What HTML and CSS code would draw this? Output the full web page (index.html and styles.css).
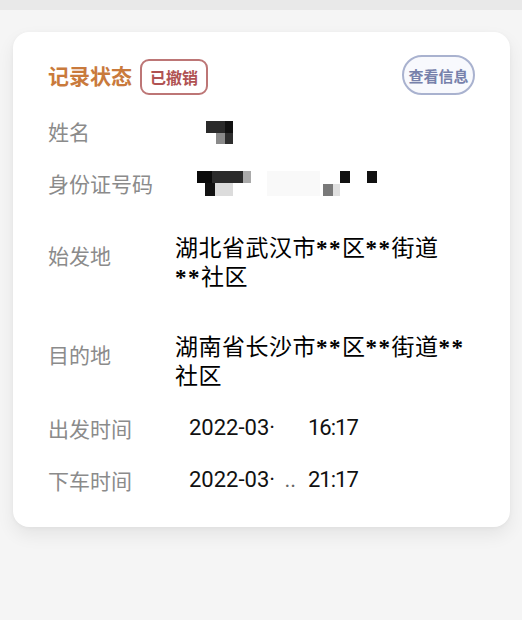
FILE: index.html
```html
<!DOCTYPE html>
<html lang="zh-CN">
<head>
    <meta charset="UTF-8">
    <meta name="viewport" content="width=device-width, initial-scale=1.0">
    <title>记录详情</title>
    <link rel="stylesheet" href="styles.css">
</head>
<body>
    <div class="top-strip"></div>

    <div class="card">
        <div class="card-header">
            <div class="status">
                <span class="status-title">记录状态</span>
                <span class="status-badge">已撤销</span>
            </div>
            <button class="info-button">查看信息</button>
        </div>

        <div class="row row-name">
            <div class="label">姓名</div>
            <div class="value">
                <svg class="mosaic mosaic-name" width="27" height="23" viewBox="0 0 27 23">
                    <rect x="0" y="0" width="19" height="12" fill="#2a2a2a"/>
                    <rect x="19" y="0" width="8" height="12" fill="#111"/>
                    <rect x="10" y="12" width="9" height="11" fill="#8a8a8a"/>
                    <rect x="19" y="12" width="8" height="11" fill="#2e2e2e"/>
                </svg>
            </div>
        </div>

        <div class="row row-id">
            <div class="label">身份证号码</div>
            <div class="value">
                <svg class="mosaic mosaic-id" width="181" height="25" viewBox="0 0 181 25">
                    <rect x="70" y="0" width="53" height="25" fill="#f9f9f9"/>
                    <rect x="0" y="0" width="15" height="12" fill="#0a0a0a"/>
                    <rect x="15" y="0" width="31" height="12" fill="#2b2b2b"/>
                    <rect x="46" y="0" width="8" height="12" fill="#aaa"/>
                    <rect x="8" y="12" width="10" height="13" fill="#111"/>
                    <rect x="18" y="12" width="18" height="13" fill="#dcdcdc"/>
                    <rect x="126" y="13" width="10" height="12" fill="#7a7a7a"/>
                    <rect x="136" y="13" width="7" height="12" fill="#e0e0e0"/>
                    <rect x="143" y="0" width="10" height="12" fill="#111"/>
                    <rect x="170" y="0" width="10" height="12" fill="#111"/>
                </svg>
            </div>
        </div>

        <div class="row row-address row-start">
            <div class="label">始发地</div>
            <div class="address">湖北省武汉市<span class="star">**</span>区<span class="star">**</span>街道<br><span class="star">**</span>社区</div>
        </div>

        <div class="row row-address row-dest">
            <div class="label">目的地</div>
            <div class="address">湖南省长沙市<span class="star">**</span>区<span class="star">**</span>街道<span class="star">**</span>社区</div>
        </div>

        <div class="row row-time row-depart">
            <div class="label">出发时间</div>
            <div class="time-value">
                <span class="date">2022-03·</span>
                <span class="clock">16:17</span>
            </div>
        </div>

        <div class="row row-time row-arrive">
            <div class="label">下车时间</div>
            <div class="time-value">
                <span class="date">2022-03· <span class="dots">..</span></span>
                <span class="clock">21:17</span>
            </div>
        </div>
    </div>
</body>
</html>
```

FILE: styles.css
```css
* {
    margin: 0;
    padding: 0;
    box-sizing: border-box;
}

body {
    background-color: #f5f5f5;
    min-height: 100vh;
    font-family: "Noto Sans CJK SC", "Noto Sans", sans-serif;
}

.top-strip {
    height: 10px;
    background-color: #e9e9e9;
}

.card {
    width: 497px;
    margin: 22px 0 0 13px;
    padding: 23px 35px 26px 35px;
    background-color: white;
    border-radius: 16px;
    box-shadow: 0 8px 18px rgba(0, 0, 0, 0.07), 0 1px 4px rgba(0, 0, 0, 0.04);
}

.card-header {
    height: 40px;
    display: flex;
    justify-content: space-between;
    align-items: center;
}

.status {
    display: flex;
    align-items: center;
    gap: 8px;
}

.status-title {
    font-size: 21px;
    font-weight: bold;
    color: #c97a3c;
    line-height: 1;
}

.status-badge {
    height: 36px;
    margin-top: 3px;
    padding: 0 8px;
    border: 2px solid #bd7676;
    border-radius: 9px;
    color: #b05252;
    font-size: 16px;
    font-weight: bold;
    line-height: 32px;
}

.info-button {
    width: 73px;
    height: 40px;
    border: 2px solid #a9b2cf;
    border-radius: 20px;
    background-color: #f8f9fd;
    color: #7781ab;
    font-family: "Noto Sans CJK SC", sans-serif;
    font-size: 15px;
    font-weight: bold;
}

.row {
    display: flex;
}

.label {
    width: 127px;
    flex-shrink: 0;
    font-size: 21px;
    color: #8b8b8b;
    line-height: 42px;
}

.row-name {
    margin-top: 15px;
    height: 42px;
    align-items: center;
}

.row-id {
    margin-top: 10px;
    height: 42px;
    align-items: center;
}

.mosaic {
    display: block;
    filter: blur(0.5px);
}

.mosaic-name {
    margin-left: 31px;
    margin-top: 2px;
}

.mosaic-id {
    margin-left: 22px;
}

.row-address {
    align-items: flex-start;
}

.row-address .label {
    line-height: 29px;
    margin-top: 9px;
}

.row-start {
    margin-top: 28px;
}

.row-dest {
    margin-top: 41px;
}

.address {
    width: 292px;
    height: 58px;
    font-family: "Noto Sans CJK SC", serif;
    font-size: 23px;
    letter-spacing: 0.5px;
    line-height: 29px;
    color: #000;
}

.star {
    font-family: "Liberation Serif", serif;
    font-weight: bold;
    letter-spacing: 1.5px;
    line-height: 1;
}

.row-time {
    height: 42px;
    align-items: center;
}

.row-depart {
    margin-top: 18px;
}

.row-arrive {
    margin-top: 10px;
}

.time-value {
    padding-left: 14px;
    display: flex;
    font-family: Roboto, "Liberation Sans", sans-serif;
    font-size: 22px;
    color: #111;
    line-height: 42px;
}

.date {
    width: 119px;
    white-space: nowrap;
}

.clock {
    letter-spacing: -1px;
}

.dots {
    color: #666;
    margin-left: 4px;
}
```
